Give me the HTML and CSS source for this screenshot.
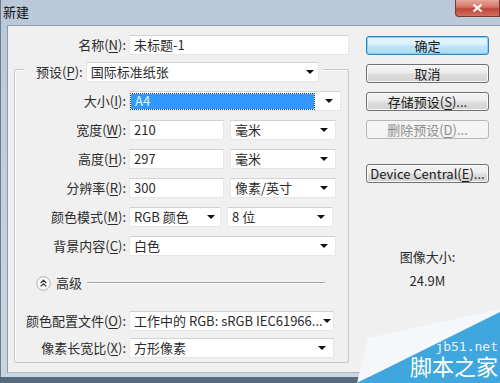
FILE: index.html
```html
<!DOCTYPE html>
<html lang="zh-CN">
<head>
	<meta charset="UTF-8">
	<meta name="viewport" content="width=device-width, initial-scale=1.0">
	<link rel="stylesheet" href="styles.css">
	<title>新建</title>
</head>
<body>
	<div class="window">
		<div class="titlebar">
			<span class="title">新建</span>
			<div class="close">
				<svg width="11" height="10" viewBox="0 0 11 10"><path d="M1.5 1.5 L9.5 8.5 M9.5 1.5 L1.5 8.5" stroke="#fff" stroke-width="2.2"/></svg>
			</div>
		</div>
		<div class="frame">
			<div class="client">
				<div class="main">
					<div class="row">
						<label class="lbl">名称(<u>N</u>):</label>
						<div class="field w-name">未标题-1</div>
					</div>
					<div class="group">
						<div class="group-head">
							<label>预设(<u>P</u>):</label>
							<div class="select w-preset"><span>国际标准纸张</span><i class="arrow"></i></div>
						</div>
						<div class="group-body">
							<div class="row">
								<label class="lbl">大小(<u>I</u>):</label>
								<div class="select w-size"><span class="value">A4</span><i class="arrow"></i></div>
							</div>
							<div class="row">
								<label class="lbl">宽度(<u>W</u>):</label>
								<div class="field w-num">210</div>
								<div class="select w-unit"><span>毫米</span><i class="arrow"></i></div>
							</div>
							<div class="row">
								<label class="lbl">高度(<u>H</u>):</label>
								<div class="field w-num">297</div>
								<div class="select w-unit"><span>毫米</span><i class="arrow"></i></div>
							</div>
							<div class="row">
								<label class="lbl">分辨率(<u>R</u>):</label>
								<div class="field w-num">300</div>
								<div class="select w-unit"><span>像素/英寸</span><i class="arrow"></i></div>
							</div>
							<div class="row">
								<label class="lbl">颜色模式(<u>M</u>):</label>
								<div class="select w-mode"><span>RGB 颜色</span><i class="arrow"></i></div>
								<div class="select w-unit"><span>8 位</span><i class="arrow"></i></div>
							</div>
							<div class="row">
								<label class="lbl">背景内容(<u>C</u>):</label>
								<div class="select w-bg"><span>白色</span><i class="arrow"></i></div>
							</div>
						</div>
						<div class="advanced">
							<svg class="toggle" width="15" height="15" viewBox="0 0 15 15">
								<circle cx="7.5" cy="7.5" r="6.8" fill="#f6f6f6" stroke="#b4b4b4"/>
								<path d="M4.6 7 L7.5 4.4 L10.4 7 M4.6 10.4 L7.5 7.8 L10.4 10.4" fill="none" stroke="#333" stroke-width="1.2"/>
							</svg>
							<span>高级</span>
							<span class="rule"></span>
						</div>
						<div class="group-body extra">
							<div class="row">
								<label class="lbl">颜色配置文件(<u>O</u>):</label>
								<div class="select w-profile"><span>工作中的 RGB: sRGB IEC61966...</span><i class="arrow"></i></div>
							</div>
							<div class="row">
								<label class="lbl">像素长宽比(<u>X</u>):</label>
								<div class="select w-profile"><span>方形像素</span><i class="arrow"></i></div>
							</div>
						</div>
					</div>
				</div>
				<div class="side">
					<button class="btn default">确定</button>
					<button class="btn">取消</button>
					<button class="btn">存储预设(<u>S</u>)...</button>
					<button class="btn" disabled>删除预设(<u>D</u>)...</button>
					<button class="btn central">Device Central(<u>E</u>)...</button>
					<div class="info">
						<p>图像大小:</p>
						<p>24.9M</p>
					</div>
				</div>
			</div>
		</div>
		<div class="watermark">
			<svg class="wm-shape" width="180" height="83" viewBox="320 300 180 83">
				<polygon points="368,338 500,309 500,313 357,383" fill="#f4f8fb"/>
				<polygon points="500,312 500,383 357,383" fill="#3fa7dd"/>
			</svg>
			<div class="wm-text">
				<span class="wm-url">jb51.net</span>
				<span class="wm-name">脚本之家</span>
			</div>
		</div>
	</div>
</body>
</html>
```

FILE: styles.css
```css
*{
	margin: 0;
	padding: 0;
	box-sizing: border-box;
}
body{
	width: 500px;
	height: 383px;
	overflow: hidden;
	font-family: "Noto Sans CJK SC", sans-serif;
	font-size: 13px;
	color: #2b2b2b;
	background: #56697d;
}
u{
	text-decoration-thickness: 1px;
	text-underline-offset: 2px;
}
.window{
	position: relative;
	width: 500px;
	height: 383px;
	display: flex;
	flex-direction: column;
	background: linear-gradient(#b9c9d9, #c9d5e1);
	border-bottom: 6px solid #56697d;
}
.titlebar{
	height: 25px;
	display: flex;
	justify-content: space-between;
	align-items: flex-start;
	border-left: 1px solid #6c7c8c;
}
.title{
	padding: 4px 0 0 2px;
	line-height: 16px;
	color: #111;
}
.close{
	width: 45px;
	height: 17px;
	display: flex;
	align-items: center;
	justify-content: center;
	border: 1px solid #7a3a32;
	border-top: none;
	border-radius: 0 0 0 4px;
	background: linear-gradient(#e6a89c, #d47363 45%, #c0463a 55%, #d07060);
}
.frame{
	flex: 1;
	display: flex;
	padding: 0 0 4px 6px;
	border-left: 1px solid #6c7c8c;
}
.client{
	flex: 1;
	display: flex;
	gap: 17px;
	padding: 9px 0 0 6px;
	background: #f0f0f0;
	border-left: 1px solid #8b9bab;
	border-top: 1px solid #8b9bab;
	border-bottom: 1px solid #a9b6c3;
}
.main{
	width: 335px;
}
.row{
	display: flex;
	align-items: center;
	height: 20px;
}
.lbl{
	width: 112px;
	margin-right: 3px;
	text-align: right;
	line-height: 20px;
	white-space: nowrap;
}
.group .lbl{
	width: 111px;
}
.field, .select{
	height: 20px;
	display: flex;
	align-items: center;
	padding-left: 4px;
	background: #fff;
	border: 1px solid #e6e6e6;
	border-top-color: #d2d2d2;
	line-height: 18px;
	white-space: nowrap;
	overflow: hidden;
}
.arrow{
	flex: none;
	margin-left: auto;
	margin-right: 7px;
	border-left: 4px solid transparent;
	border-right: 4px solid transparent;
	border-top: 4px solid #111;
}
.w-name{ width: 220px; }
.w-preset{ width: 233px; }
.w-preset .arrow{ margin-right: 4px; }
.w-size{ width: 212px; padding-left: 1px; }
.w-size .value{
	width: 183px;
	height: 15px;
	line-height: 14px;
	padding-left: 4px;
	color: #e6f3ff;
	background: #3399ff;
	outline: 1px dotted #1a3d66;
}
.w-num{ width: 95px; }
.w-unit{ width: 106px; margin-left: 6px; }
.w-mode{ width: 92px; }
.w-mode .arrow{ margin-right: 5px; }
.w-bg{ width: 207px; }
.w-profile{ width: 205px; }
.group{
	margin-top: 14px;
	border: 1px solid #c8c8c8;
	border-radius: 2px;
	box-shadow: inset 1px 1px 0 #fff;
	padding-bottom: 4px;
}
.group-head{
	display: flex;
	align-items: center;
	width: max-content;
	margin: -8px 0 0 9px;
	padding: 0 4px 0 12px;
	background: #f0f0f0;
}
.group-head label{
	margin-right: 3px;
	line-height: 20px;
}
.group-body{
	display: flex;
	flex-direction: column;
	gap: 9px;
	padding-top: 9px;
}
.group-body.extra{
	gap: 7px;
	padding-top: 20px;
}
.advanced{
	display: flex;
	align-items: center;
	gap: 5px;
	height: 16px;
	margin: 19px 23px 0 21px;
}
.advanced span{
	line-height: 16px;
}
.rule{
	flex: 1;
	height: 2px;
	border-top: 1px solid #a6a6a6;
	border-bottom: 1px solid #fff;
}
.side{
	width: 123px;
	padding-top: 1px;
	display: flex;
	flex-direction: column;
	gap: 9px;
}
.btn{
	height: 19px;
	font: inherit;
	line-height: 17px;
	color: #1a1a1a;
	border: 1px solid #707070;
	border-radius: 3px;
	background: linear-gradient(#f4f4f4, #ececec 48%, #dedede 52%, #d2d2d2);
	box-shadow: inset 0 0 0 1px #fafafa;
}
.btn.default{
	border-color: #3c7fb1;
	background: linear-gradient(#e8f6fd, #d7effc 48%, #bde5fb 52%, #a9dbf6);
	box-shadow: inset 0 0 0 1px #7fd2f8;
}
.btn:disabled{
	color: #8d8d8d;
	border-color: #b5b8ba;
	background: #f4f4f4;
	box-shadow: none;
}
.btn.central{
	margin-top: 16px;
}
.info{
	margin-top: 57px;
	display: flex;
	flex-direction: column;
	align-items: center;
	gap: 8px;
	line-height: 16px;
}
.watermark{
	position: absolute;
	left: 320px;
	top: 300px;
	width: 180px;
	height: 83px;
	overflow: hidden;
}
.wm-shape{
	position: absolute;
	inset: 0;
}
.wm-text{
	position: relative;
	display: flex;
	flex-direction: column;
	align-items: flex-end;
	gap: 1px;
	padding: 41px 2px 0 0;
	color: #fff;
}
.wm-url{
	font-family: "DejaVu Sans Mono", monospace;
	font-size: 13px;
	line-height: 12px;
	color: #e4f3fb;
}
.wm-name{
	font-size: 22px;
	line-height: 23px;
}
```
